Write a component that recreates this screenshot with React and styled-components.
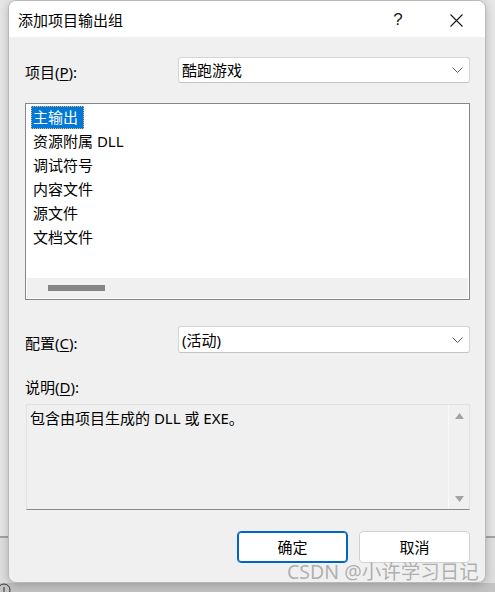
import React from "react";
import styled, { createGlobalStyle } from "styled-components";

const Global = createGlobalStyle`
  html, body { margin: 0; padding: 0; }
  body {
    font-family: "Noto Sans", "Noto Sans CJK SC", sans-serif;
    -webkit-font-smoothing: antialiased;
  }
  * { box-sizing: border-box; }
`;

const Page = styled.div`
  position: relative;
  width: 495px;
  height: 592px;
  overflow: hidden;
  padding: 0 9px 0 8px;
  background-color: #e6e6e6;
  background-image: linear-gradient(
    to bottom,
    transparent 536px,
    #a2a2a2 536px,
    #a2a2a2 538px,
    #dedede 538px,
    #dedede 583px,
    #c3c3c3 583px
  );
`;

const Dialog = styled.div`
  width: 478px;
  height: 583px;
  border-radius: 8px;
  overflow: hidden;
  border: 1px solid #b9b9b9;
  box-shadow: 0 2px 10px rgba(0, 0, 0, 0.22);
  background: #f0f0f0;
  display: flex;
  flex-direction: column;
  font-family: "Noto Sans", "Noto Sans CJK SC", sans-serif;
  color: #000;
`;

const TitleBar = styled.div`
  height: 36px;
  flex: none;
  background: #ffffff;
  display: flex;
  align-items: center;
  padding: 2px 6px 0 9px;
`;

const Title = styled.div`
  flex: 1;
  font-size: 15px;
  line-height: 20px;
  color: #000;
`;

const CaptionButton = styled.div`
  width: 46px;
  height: 30px;
  display: flex;
  align-items: center;
  justify-content: center;
  margin-left: ${(p) => p.$gap || 0}px;
  font-size: 17px;
  color: #1a1a1a;
  font-family: "Liberation Sans", "Noto Sans", sans-serif;
`;

const Body = styled.div`
  flex: 1;
  display: flex;
  flex-direction: column;
  padding: 0 15px 0 16px;
`;

const Row = styled.div`
  display: flex;
  align-items: flex-start;
  margin-top: ${(p) => p.$mt}px;
`;

const Label = styled.div`
  width: 153px;
  flex: none;
  font-size: 15px;
  line-height: 20px;
  margin-top: ${(p) => p.$offset || 0}px;
  color: #000;
  u { text-underline-offset: 2px; }
`;

const BlockLabel = styled(Label)`
  width: auto;
  margin-top: ${(p) => p.$mt}px;
`;

const Combo = styled.div`
  flex: 1;
  height: ${(p) => p.$h}px;
  background: #ffffff;
  border: 1px solid #d5d5d5;
  border-bottom-color: #c4c4c4;
  border-radius: 3px;
  display: flex;
  align-items: center;
  padding: 0 6px 0 3px;
  font-size: 15px;
`;

const ComboText = styled.span`
  flex: 1;
  line-height: 20px;
`;

const ListBox = styled.div`
  margin-top: 20px;
  height: 197px;
  border: 1px solid #828790;
  background: #ffffff;
  display: flex;
  flex-direction: column;
  padding: 1px;
`;

const Items = styled.div`
  flex: 1;
  padding: 1px 0 0 4px;
`;

const Item = styled.div`
  height: 24px;
`;

const ItemText = styled.span`
  display: inline-block;
  height: 23px;
  line-height: 23px;
  font-size: 15px;
  padding: 0 6px 0 2px;
  color: ${(p) => (p.$selected ? "#ffffff" : "#000")};
  background: ${(p) => (p.$selected ? "#0078d7" : "transparent")};
  outline: ${(p) => (p.$selected ? "1px dotted #f5b25a" : "none")};
  outline-offset: -1px;
`;

const HScroll = styled.div`
  height: 20px;
  background: #f0f0f0;
  display: flex;
  align-items: center;
  padding-left: 21px;
`;

const Thumb = styled.div`
  width: 57px;
  height: 6px;
  background: #858585;
`;

const DescBox = styled.div`
  margin-top: 7px;
  height: 106px;
  border: 1px solid #e2e2e2;
  border-bottom-color: #8a8a8a;
  background: #f0f0f0;
  display: flex;
  margin-left: 1px;
`;

const DescText = styled.div`
  flex: 1;
  font-size: 15px;
  line-height: 20px;
  padding: 3px 0 0 3px;
`;

const VScroll = styled.div`
  width: 21px;
  border-left: 1px solid #fafafa;
  display: flex;
  flex-direction: column;
  justify-content: space-between;
  align-items: center;
  padding: 8px 0 7px;
`;

const Buttons = styled.div`
  margin-top: 21px;
  display: flex;
  justify-content: flex-end;
  gap: 11px;
`;

const Button = styled.div`
  width: 111px;
  height: 32px;
  background: #ffffff;
  border: 1px solid ${(p) => (p.$primary ? "#0067c0" : "#d1d1d1")};
  box-shadow: ${(p) => (p.$primary ? "inset 0 0 0 1px #0067c0" : "none")};
  border-radius: 4px;
  display: flex;
  align-items: center;
  justify-content: center;
  font-size: 15px;
  line-height: 20px;
  color: #000;
`;

const Watermark = styled.div`
  position: absolute;
  left: 287px;
  top: 560px;
  font-size: 19.5px;
  line-height: 24px;
  color: rgba(110, 110, 110, 0.5);
  white-space: nowrap;
  font-family: "Noto Sans", "Noto Sans CJK SC", sans-serif;
`;

const Deco = styled.svg`
  position: absolute;
  left: -3px;
  top: 583px;
`;

const Chevron = () => (
  <svg width="11" height="6" viewBox="0 0 11 6">
    <path d="M0.5 0.5 L5.5 5.5 L10.5 0.5" fill="none" stroke="#5a5a5a" strokeWidth="1" />
  </svg>
);

const Tri = ({ down }) => (
  <svg width="9" height="6" viewBox="0 0 9 6">
    <path d={down ? "M0 0 L9 0 L4.5 6 Z" : "M0 6 L9 6 L4.5 0 Z"} fill="#a3a3a3" />
  </svg>
);

const items = ["主输出", "资源附属 DLL", "调试符号", "内容文件", "源文件", "文档文件"];

export default function App() {
  return (
    <Page>
      <Global />
      <Dialog>
        <TitleBar>
          <Title>添加项目输出组</Title>
          <CaptionButton>?</CaptionButton>
          <CaptionButton $gap={12}>
            <svg width="13" height="13" viewBox="0 0 13 13">
              <path d="M0.5 0.5 L12.5 12.5 M12.5 0.5 L0.5 12.5" stroke="#1a1a1a" strokeWidth="1.1" />
            </svg>
          </CaptionButton>
        </TitleBar>
        <Body>
          <Row $mt={20}>
            <Label $offset={5}>
              项目(<u>P</u>):
            </Label>
            <Combo $h={26}>
              <ComboText>酷跑游戏</ComboText>
              <Chevron />
            </Combo>
          </Row>
          <ListBox>
            <Items>
              {items.map((t, i) => (
                <Item key={t}>
                  <ItemText $selected={i === 0}>{t}</ItemText>
                </Item>
              ))}
            </Items>
            <HScroll>
              <Thumb />
            </HScroll>
          </ListBox>
          <Row $mt={26}>
            <Label $offset={7}>
              配置(<u>C</u>):
            </Label>
            <Combo $h={27}>
              <ComboText>(活动)</ComboText>
              <Chevron />
            </Combo>
          </Row>
          <BlockLabel $mt={24}>
            说明(<u>D</u>):
          </BlockLabel>
          <DescBox>
            <DescText>包含由项目生成的 DLL 或 EXE。</DescText>
            <VScroll>
              <Tri />
              <Tri down />
            </VScroll>
          </DescBox>
          <Buttons>
            <Button $primary>确定</Button>
            <Button>取消</Button>
          </Buttons>
        </Body>
      </Dialog>
      <Watermark>CSDN @小许学习日记</Watermark>
      <Deco width="14" height="14" viewBox="0 0 14 14">
        <circle cx="7" cy="7" r="6" fill="none" stroke="#333" strokeWidth="1" />
        <path d="M7 4 L7 9" stroke="#333" strokeWidth="1" />
      </Deco>
    </Page>
  );
}
